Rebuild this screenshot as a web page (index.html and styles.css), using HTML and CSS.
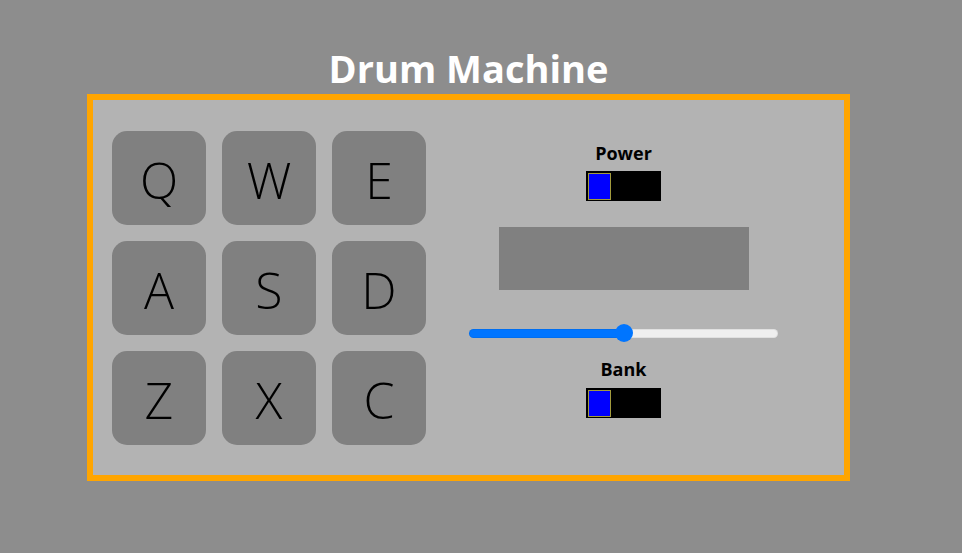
FILE: index.html
```html
<!DOCTYPE html>
<html lang="en">
<head>
<meta charset="utf-8">
<title>Drum Machine</title>
<link rel="stylesheet" href="styles.css">
</head>
<body>
<main class="page">
  <h1 class="title">Drum Machine</h1>
  <div id="drum-machine" class="machine">
    <div class="pads">
      <button class="pad">Q</button>
      <button class="pad">W</button>
      <button class="pad">E</button>
      <button class="pad">A</button>
      <button class="pad">S</button>
      <button class="pad">D</button>
      <button class="pad">Z</button>
      <button class="pad">X</button>
      <button class="pad">C</button>
    </div>
    <div class="controls">
      <div class="label">Power</div>
      <div class="toggle"><div class="knob"></div></div>
      <div id="display" class="display"></div>
      <input class="volume" type="range" min="0" max="1" step="0.01" value="0.5">
      <div class="label label-bank">Bank</div>
      <div class="toggle"><div class="knob"></div></div>
    </div>
  </div>
</main>
</body>
</html>
```

FILE: styles.css
```css
html, body {
  margin: 0;
  padding: 0;
  background: #8d8d8d;
  font-family: "Open Sans", "Liberation Sans", sans-serif;
}

.page {
  width: 962px;
  height: 553px;
  padding-top: 42px;
  box-sizing: border-box;
}

.title {
  margin: 0 0 0 87px;
  width: 763px;
  text-align: center;
  color: #ffffff;
  font-size: 38px;
  font-weight: 700;
  line-height: 52px;
}

.machine {
  margin-left: 87px;
  width: 763px;
  height: 387px;
  box-sizing: border-box;
  border: 6px solid #ffa500;
  background: #b3b3b3;
  display: flex;
  align-items: flex-start;
}

.pads {
  margin: 31px 0 0 19px;
  display: grid;
  grid-template-columns: repeat(3, 94px);
  grid-auto-rows: 94px;
  column-gap: 16px;
  row-gap: 16px;
}

.pad {
  border: none;
  margin: 0;
  padding: 0;
  background: #808080;
  border-radius: 15px;
  font-family: "Open Sans", "Liberation Sans", sans-serif;
  font-weight: 350;
  font-size: 50px;
  line-height: 1;
  color: #000000;
  display: flex;
  align-items: center;
  justify-content: center;
  padding-top: 4px;
  box-sizing: border-box;
}

.controls {
  margin: 41px 0 0 18px;
  width: 359px;
  display: flex;
  flex-direction: column;
  align-items: center;
}

.label {
  font-size: 18px;
  font-weight: 700;
  line-height: 24px;
  color: #000000;
}

.toggle {
  width: 75px;
  height: 30px;
  background: #000000;
  margin-top: 6px;
  padding: 2px 0 0 2px;
  box-sizing: border-box;
}

.knob {
  width: 23px;
  height: 27px;
  box-sizing: border-box;
  background: #0000ff;
  border: 1px solid #a39b3d;
}

.display {
  width: 250px;
  height: 63px;
  background: #808080;
  margin-top: 26px;
}

.volume {
  -webkit-appearance: none;
  appearance: none;
  width: 309px;
  height: 18px;
  margin: 34px 0 0 0;
  padding: 0;
  background: transparent;
}

.volume::-webkit-slider-runnable-track {
  height: 9px;
  border-radius: 5px;
  background: linear-gradient(to right, #0075ff 50%, #efefef 50%);
  box-shadow: inset 0 0 0 1px rgba(0, 0, 0, 0.06);
}

.volume::-webkit-slider-thumb {
  -webkit-appearance: none;
  appearance: none;
  width: 18px;
  height: 18px;
  margin-top: -4.5px;
  border-radius: 50%;
  background: #0075ff;
  border: none;
}

.label-bank {
  margin-top: 15px;
}

.label-bank + .toggle {
  margin-top: 7px;
}
```
